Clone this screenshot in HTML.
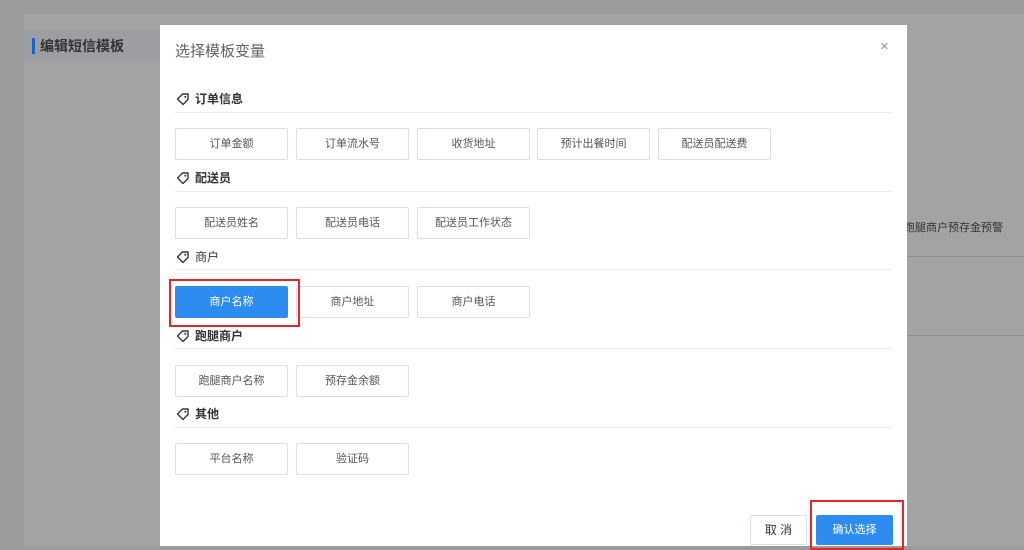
<!DOCTYPE html>
<html><head><meta charset="utf-8"><style>
*{margin:0;padding:0;box-sizing:border-box}
body{width:1024px;height:546px;overflow:hidden;position:relative;background:#9b9b9b;font-family:"Liberation Sans","Noto Sans CJK SC",sans-serif}
.a{position:absolute}
.panel{left:24px;top:14px;width:1000px;height:532px;background:#a3a3a3}
.hdr{left:24px;top:30px;width:140px;height:30px;background:#9c9ea2}
.modal{left:160px;top:25px;width:747px;height:521px;background:#fff}
.sec{font-size:12px;font-weight:bold;color:#333;height:16px;line-height:16px;white-space:nowrap;width:120px}
.sec svg{position:absolute;left:0;top:1px}
.sec span{position:absolute;left:19px;white-space:nowrap}
.line{height:1px;background:#e8eaee;left:175px;width:716px}
.btn{width:113px;height:32px;border:1px solid #dcdfe6;border-radius:2px;font-size:11px;color:#555;text-align:center;line-height:30px;background:#fff;white-space:nowrap}
.red{border:2px solid #e8232a}
</style></head><body>
<div class="a panel"></div>
<div class="a hdr"></div>
<div class="a" style="left:32px;top:38px;width:3px;height:16px;background:#1f5fc8"></div>
<div class="a" style="left:40px;top:36px;font-size:14px;font-weight:bold;color:#333">编辑短信模板</div>
<div class="a" style="left:907px;top:256px;width:117px;height:1px;background:#8e8e8e"></div>
<div class="a" style="left:907px;top:335px;width:117px;height:1px;background:#8e8e8e"></div>
<div class="a" style="left:904px;top:219px;font-size:11px;color:#333;white-space:nowrap">跑腿商户预存金预警</div>
<div class="a modal"></div>
<div class="a" style="left:175px;top:40px;font-size:15px;color:#606266">选择模板变量</div>
<div class="a" style="left:880px;top:38px;font-size:15px;color:#909399">×</div>

<div class="a sec" style="left:176px;top:91px"><svg width="14" height="14" viewBox="0 0 14 14"><path d="M1.5 7 L6.5 2 H12 V7.5 L7 12.5 Z" fill="none" stroke="#333" stroke-width="1.4" stroke-linejoin="round"/><circle cx="9.3" cy="4.7" r="1" fill="#333"/></svg><span>订单信息</span></div>
<div class="a line" style="top:112px"></div>
<div class="a btn" style="left:175px;top:128px">订单金额</div>
<div class="a btn" style="left:296px;top:128px">订单流水号</div>
<div class="a btn" style="left:417px;top:128px">收货地址</div>
<div class="a btn" style="left:537px;top:128px">预计出餐时间</div>
<div class="a btn" style="left:658px;top:128px">配送员配送费</div>

<div class="a sec" style="left:176px;top:170px"><svg width="14" height="14" viewBox="0 0 14 14"><path d="M1.5 7 L6.5 2 H12 V7.5 L7 12.5 Z" fill="none" stroke="#333" stroke-width="1.4" stroke-linejoin="round"/><circle cx="9.3" cy="4.7" r="1" fill="#333"/></svg><span>配送员</span></div>
<div class="a line" style="top:191px"></div>
<div class="a btn" style="left:175px;top:207px">配送员姓名</div>
<div class="a btn" style="left:296px;top:207px">配送员电话</div>
<div class="a btn" style="left:417px;top:207px">配送员工作状态</div>

<div class="a sec" style="left:176px;top:249px"><svg width="14" height="14" viewBox="0 0 14 14"><path d="M1.5 7 L6.5 2 H12 V7.5 L7 12.5 Z" fill="none" stroke="#333" stroke-width="1.4" stroke-linejoin="round"/><circle cx="9.3" cy="4.7" r="1" fill="#333"/></svg><span style="font-weight:normal">商户</span></div>
<div class="a line" style="top:269px"></div>
<div class="a btn" style="left:175px;top:286px;background:#2d8cf0;border-color:#2d8cf0;color:#fff">商户名称</div>
<div class="a btn" style="left:296px;top:286px">商户地址</div>
<div class="a btn" style="left:417px;top:286px">商户电话</div>
<div class="a red" style="left:169px;top:279px;width:131px;height:48px"></div>

<div class="a sec" style="left:176px;top:328px"><svg width="14" height="14" viewBox="0 0 14 14"><path d="M1.5 7 L6.5 2 H12 V7.5 L7 12.5 Z" fill="none" stroke="#333" stroke-width="1.4" stroke-linejoin="round"/><circle cx="9.3" cy="4.7" r="1" fill="#333"/></svg><span>跑腿商户</span></div>
<div class="a line" style="top:348px"></div>
<div class="a btn" style="left:175px;top:365px">跑腿商户名称</div>
<div class="a btn" style="left:296px;top:365px">预存金余额</div>

<div class="a sec" style="left:176px;top:406px"><svg width="14" height="14" viewBox="0 0 14 14"><path d="M1.5 7 L6.5 2 H12 V7.5 L7 12.5 Z" fill="none" stroke="#333" stroke-width="1.4" stroke-linejoin="round"/><circle cx="9.3" cy="4.7" r="1" fill="#333"/></svg><span>其他</span></div>
<div class="a line" style="top:427px"></div>
<div class="a btn" style="left:175px;top:443px">平台名称</div>
<div class="a btn" style="left:296px;top:443px">验证码</div>

<div class="a btn" style="left:750px;top:515px;width:57px;height:30px;line-height:28px;color:#333;font-size:12px">取 消</div>
<div class="a btn" style="left:816px;top:515px;width:77px;height:30px;line-height:28px;background:#2d8cf0;border-color:#2d8cf0;color:#fff">确认选择</div>
<div class="a red" style="left:810px;top:500px;width:94px;height:50px"></div>
</body></html>
